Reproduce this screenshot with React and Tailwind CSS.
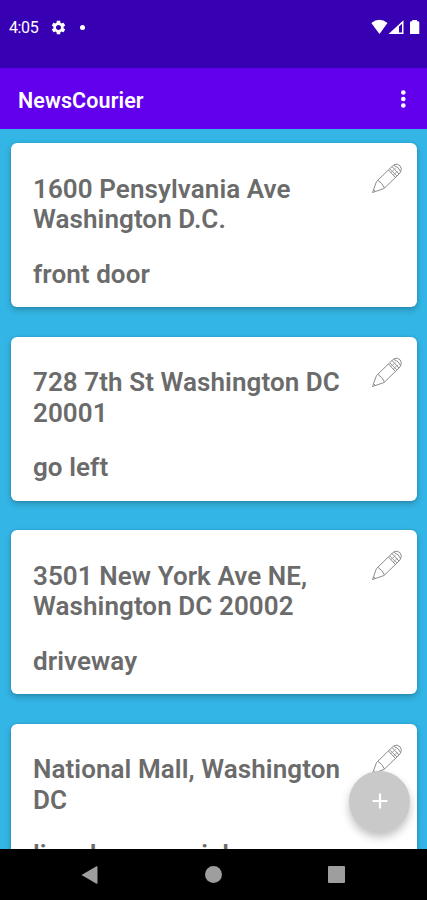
const stops = [
  { address: ['1600 Pensylvania Ave', 'Washington D.C.'], note: 'front door' },
  { address: ['728 7th St Washington DC', '20001'], note: 'go left' },
  { address: ['3501 New York Ave NE,', 'Washington DC 20002'], note: 'driveway' },
  { address: ['National Mall, Washington', 'DC'], note: 'lincoln memorial' },
];

function StatusBar() {
  return (
    <div className="flex h-[68px] shrink-0 items-start bg-[#3700b3] pt-[17px] pl-[9px] text-white">
      <span className="w-[31px] text-[16px] leading-[22px] tracking-[-0.4px]">4:05</span>
      <svg className="mt-[2px] ml-[10px] h-[17px] w-[17px]" viewBox="0 0 24 24" fill="currentColor">
        <path d="M19.14 12.94c.04-.3.06-.61.06-.94 0-.32-.02-.64-.07-.94l2.03-1.58a.49.49 0 0 0 .12-.61l-1.92-3.32a.488.488 0 0 0-.59-.22l-2.39.96c-.5-.38-1.03-.7-1.62-.94l-.36-2.54a.484.484 0 0 0-.48-.41h-3.84c-.24 0-.43.17-.47.41l-.36 2.54c-.59.24-1.13.57-1.62.94l-2.39-.96c-.22-.08-.47 0-.59.22L2.74 8.87c-.12.21-.08.47.12.61l2.03 1.58c-.05.3-.09.63-.09.94s.02.64.07.94l-2.03 1.58a.49.49 0 0 0-.12.61l1.92 3.32c.12.22.37.29.59.22l2.39-.96c.5.38 1.03.7 1.62.94l.36 2.54c.05.24.24.41.48.41h3.84c.24 0 .44-.17.47-.41l.36-2.54c.59-.24 1.13-.56 1.62-.94l2.39.96c.22.08.47 0 .59-.22l1.92-3.32c.12-.22.07-.47-.12-.61l-2.01-1.58zM12 15.6c-1.98 0-3.6-1.62-3.6-3.6s1.62-3.6 3.6-3.6 3.6 1.62 3.6 3.6-1.62 3.6-3.6 3.6z" />
      </svg>
      <span className="mt-[8px] ml-[13px] h-[5px] w-[5px] rounded-full bg-white" />
      <svg className="mt-[2px] mr-[6px] ml-auto h-[16px] w-[50px]" viewBox="0 0 50 16" fill="currentColor">
        <path d="M0.3 4Q8.300 -2.500 16.500 4L8.500 15z" />
        <path fillRule="evenodd" d="M17.500 15L32.500 1.200V15zM28 7.500V13.500H31V4.800z" />
        <path d="M39 3.500Q39 2.500 40 2.300H41.300V1H46V2.300H47.200Q48.300 2.500 48.300 3.500V15H39z" />
      </svg>
    </div>
  );
}

function AppBar() {
  return (
    <header className="flex h-[60.500px] shrink-0 items-center justify-between bg-[#6200ee] pt-[3px] pr-[21px] pl-[18px] text-white">
      <h1 className="pt-[2px] text-[21.500px] font-semibold tracking-[0.1px]">NewsCourier</h1>
      <svg className="h-[20px] w-[6px]" viewBox="0 0 6 20" fill="currentColor">
        <circle cx="3.300" cy="2.500" r="2.300" />
        <circle cx="3.300" cy="9" r="2.300" />
        <circle cx="3.300" cy="15.500" r="2.300" />
      </svg>
    </header>
  );
}

function Pencil() {
  return (
    <svg className="h-[32px] w-[32px] shrink-0" viewBox="0 0 32 32" fill="none" stroke="#8c8c8c" strokeWidth="1" strokeLinejoin="round">
      <path d="M1.500 29.500L5.500 18.500L21 3.500L28 11L13 25.500z" />
      <path d="M21 3.500L23 1.800Q26.300 0 29 2.700Q31.500 5.800 29.500 9L28 11" />
      <path d="M7 17.500Q11 19.500 13.500 25M2.500 26.500L4.500 28.500" />
      <path d="M17.500 7L24.500 14.500M23 2.500Q28 4 29.500 8.500" />
      <path d="M19 6L26 13M20 9.500L24.500 5.500M22.500 12L26.500 8" stroke="#a0a0a0" />
    </svg>
  );
}

function StopCard({ stop }) {
  return (
    <article className="flex h-[164px] shrink-0 items-start rounded-[6px] bg-white pt-[30.500px] pr-[14.500px] pl-[22px] text-[26px] leading-[30.500px] font-semibold tracking-[0.080px] text-[#6b6b6b] shadow-[0_3px_6px_rgba(0,0,0,0.22),0_0_2px_rgba(0,0,0,0.18)]">
      <div className="min-w-0 flex-1 whitespace-nowrap">
        {stop.address.map((line) => (
          <p key={line}>{line}</p>
        ))}
        <p className="mt-[24px]">{stop.note}</p>
      </div>
      <div className="-mt-[10.500px]">
        <Pencil />
      </div>
    </article>
  );
}

function NavBar() {
  return (
    <nav className="flex h-[51px] shrink-0 items-center justify-between bg-black pr-[82px] pl-[81px] text-[#9e9e9e]">
      <svg className="h-[18px] w-[17px]" viewBox="0 0 17 18" fill="currentColor">
        <path d="M0.500 9L15.500 0.300Q16.500 0 16.500 1V17Q16.500 18 15.500 17.700z" />
      </svg>
      <span className="ml-[1px] h-[16.500px] w-[16.500px] rounded-full bg-[#9e9e9e]" />
      <span className="h-[17px] w-[17px] rounded-[1px] bg-[#9e9e9e]" />
    </nav>
  );
}

export default function App() {
  return (
    <div className="relative flex h-[900px] w-[427px] flex-col overflow-hidden bg-[#33b5e5] font-['Roboto',sans-serif]">
      <StatusBar />
      <AppBar />
      <main className="flex min-h-0 flex-1 flex-col gap-[29.500px] overflow-hidden pt-[14.900px] pr-[10px] pl-[11px]">
        {stops.map((stop) => (
          <StopCard key={stop.note} stop={stop} />
        ))}
      </main>
      <NavBar />

      {/* add stop */}
      <button className="absolute top-[771px] left-[349px] flex h-[61px] w-[61px] items-center justify-center rounded-full bg-[#c9c9c9] shadow-[0_5px_8px_rgba(0,0,0,0.25)]">
        <svg className="-mt-[1px] h-[16px] w-[16px]" viewBox="0 0 16 16" stroke="white" strokeWidth="2.200">
          <path d="M8 0.500V15.500M0.500 8H15.500" />
        </svg>
      </button>
    </div>
  );
}
